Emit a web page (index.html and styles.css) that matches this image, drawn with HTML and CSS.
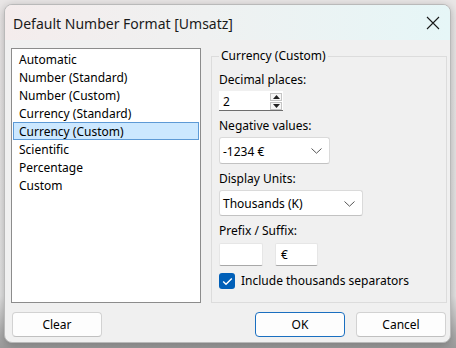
FILE: index.html
```html
<!DOCTYPE html>
<html>
<head>
<meta charset="utf-8">
<link rel="stylesheet" href="styles.css">
</head>
<body>
<div class="dialog">
  <div class="titlebar">
    <span class="title">Default Number Format [Umsatz]</span>
    <svg class="close" width="14" height="14" viewBox="0 0 14 14"><path d="M1 1L13 13M13 1L1 13" stroke="#1a1a1a" stroke-width="1.1" fill="none"/></svg>
  </div>
  <div class="content">
    <div class="main">
      <ul class="list">
        <li>Automatic</li>
        <li>Number (Standard)</li>
        <li>Number (Custom)</li>
        <li>Currency (Standard)</li>
        <li class="sel">Currency (Custom)</li>
        <li>Scientific</li>
        <li>Percentage</li>
        <li>Custom</li>
      </ul>
      <fieldset class="group">
        <legend>Currency (Custom)</legend>
        <div class="label first">Decimal places:</div>
        <div class="spin">
          <span class="val">2</span>
          <div class="spinbtns">
            <span class="sbtn"><svg width="7" height="4" viewBox="0 0 7 4"><path d="M0 4L3.5 0L7 4Z" fill="#222"/></svg></span>
            <span class="sbtn"><svg width="7" height="4" viewBox="0 0 7 4"><path d="M0 0L3.5 4L7 0Z" fill="#222"/></svg></span>
          </div>
        </div>
        <div class="label">Negative values:</div>
        <div class="select s1"><span>-1234 €</span><svg width="11" height="6" viewBox="0 0 11 6"><path d="M0.5 0.5L5.5 5.2L10.5 0.5" stroke="#555" stroke-width="1" fill="none"/></svg></div>
        <div class="label">Display Units:</div>
        <div class="select s2"><span>Thousands (K)</span><svg width="11" height="6" viewBox="0 0 11 6"><path d="M0.5 0.5L5.5 5.2L10.5 0.5" stroke="#555" stroke-width="1" fill="none"/></svg></div>
        <div class="label">Prefix / Suffix:</div>
        <div class="affix">
          <div class="input pre"></div>
          <div class="input suf">€</div>
        </div>
        <div class="check">
          <span class="box"><svg width="11" height="9" viewBox="0 0 11 9"><path d="M1.2 4.6L4 7.3L9.8 1.5" stroke="#fff" stroke-width="1.4" fill="none"/></svg></span>
          <span>Include thousands separators</span>
        </div>
      </fieldset>
    </div>
    <div class="footer">
      <button class="btn">Clear</button>
      <div class="right">
        <button class="btn primary">OK</button>
        <button class="btn">Cancel</button>
      </div>
    </div>
  </div>
</div>
</body>
</html>
```
FILE: styles.css
```css
html, body {
  margin: 0;
  padding: 0;
}
body {
  width: 456px;
  height: 348px;
  overflow: hidden;
  background: linear-gradient(180deg, #e9e6e6 0%, #e2e2e2 85%, #9a9a9a 100%);
  font-family: "Noto Sans", "Open Sans", sans-serif;
  font-size: 12px;
  color: #000;
}
.dialog {
  box-sizing: border-box;
  width: 447px;
  height: 339px;
  margin: 4px 0 0 4px;
  border: 1px solid #b9b9b9;
  border-radius: 8px;
  background: #f0f0f0;
  box-shadow: 0 2px 8px rgba(0,0,0,0.25);
  overflow: hidden;
  display: flex;
  flex-direction: column;
}
.titlebar {
  height: 35px;
  flex: none;
  display: flex;
  align-items: center;
  justify-content: space-between;
  padding: 0 10px 0 8px;
  background: linear-gradient(90deg, #f4ecec 0%, #eff1f1 45%, #e6f6f7 100%);
}
.title {
  font-size: 14px;
  color: #1a1a1a;
  margin-top: 1px;
}
.close {
  display: block;
  margin-top: 1px;
}
.content {
  flex: 1;
  padding: 8px 3px 5px 6px;
  display: flex;
  flex-direction: column;
}
.main {
  height: 255px;
  display: flex;
  gap: 10px;
}
.list {
  box-sizing: border-box;
  width: 190px;
  height: 255px;
  margin: 0;
  padding: 1px 0 0 0;
  list-style: none;
  background: #fff;
  border: 1px solid #8c8c8c;
}
.list li {
  height: 15px;
  line-height: 16px;
  margin: 0 1px;
  padding: 1px 5px 0 5px;
  border: 1px solid transparent;
  white-space: nowrap;
}
.list li.sel {
  background: #cce8ff;
  border-color: #5d9ad6;
}
.group {
  box-sizing: border-box;
  flex: 1;
  margin: 0;
  min-width: 0;
  height: 255px;
  padding: 0 6px 0 7px;
  border: 1px solid #dcdcdc;
  display: flex;
  flex-direction: column;
  align-items: flex-start;
}
.group legend {
  padding: 0 2px;
  line-height: 16px;
}
.label {
  line-height: 16px;
  margin-top: 7px;
  margin-bottom: -1px;
}
.label.first {
  margin-top: 8px;
}
.spin {
  box-sizing: border-box;
  width: 64px;
  height: 20px;
  margin-top: 4px;
  background: #fff;
  border-bottom: 1px solid #6e6e6e;
  display: flex;
  align-items: center;
  justify-content: space-between;
  padding: 1px 1px 0 4px;
}
.spinbtns {
  display: flex;
  flex-direction: column;
  gap: 1px;
}
.sbtn {
  box-sizing: border-box;
  width: 12px;
  height: 8px;
  border: 1px solid #c4c4c4;
  background: #f7f7f7;
  display: flex;
  align-items: center;
  justify-content: center;
}
.sbtn svg {
  display: block;
}
.select {
  box-sizing: border-box;
  height: 27px;
  margin-top: 4px;
  background: #fff;
  border: 1px solid #dadada;
  border-bottom-color: #c2c2c2;
  border-radius: 3px;
  display: flex;
  align-items: center;
  justify-content: space-between;
  padding: 1px 7px 0 3px;
}
.select svg {
  display: block;
}
.s1 {
  width: 111px;
}
.s2 {
  width: 144px;
  height: 26px;
}
.affix {
  display: flex;
  gap: 12px;
  margin-top: 5px;
}
.input {
  box-sizing: border-box;
  height: 23px;
  background: #fff;
  border: 1px solid #e6e6e6;
  border-bottom-color: #a8a8a8;
  border-radius: 2px;
  line-height: 22px;
  padding-left: 5px;
}
.pre {
  width: 44px;
}
.suf {
  width: 43px;
}
.check {
  display: flex;
  align-items: center;
  gap: 6px;
  margin-top: 7px;
  line-height: 16px;
}
.box {
  box-sizing: border-box;
  width: 16px;
  height: 16px;
  border-radius: 3px;
  background: #005fb8;
  display: flex;
  align-items: center;
  justify-content: center;
}
.box svg {
  display: block;
}
.footer {
  margin: 9px 1px 0 1px;
  display: flex;
  justify-content: space-between;
}
.right {
  display: flex;
  gap: 11px;
}
.btn {
  box-sizing: border-box;
  width: 90px;
  height: 25px;
  margin: 0;
  padding: 0;
  font-family: inherit;
  font-size: 12px;
  color: #000;
  background: #fdfdfd;
  border: 1px solid #d2d2d2;
  border-bottom-color: #c0c0c0;
  border-radius: 4px;
}
.btn.primary {
  border: 1px solid #1a6fc0;
}
```
